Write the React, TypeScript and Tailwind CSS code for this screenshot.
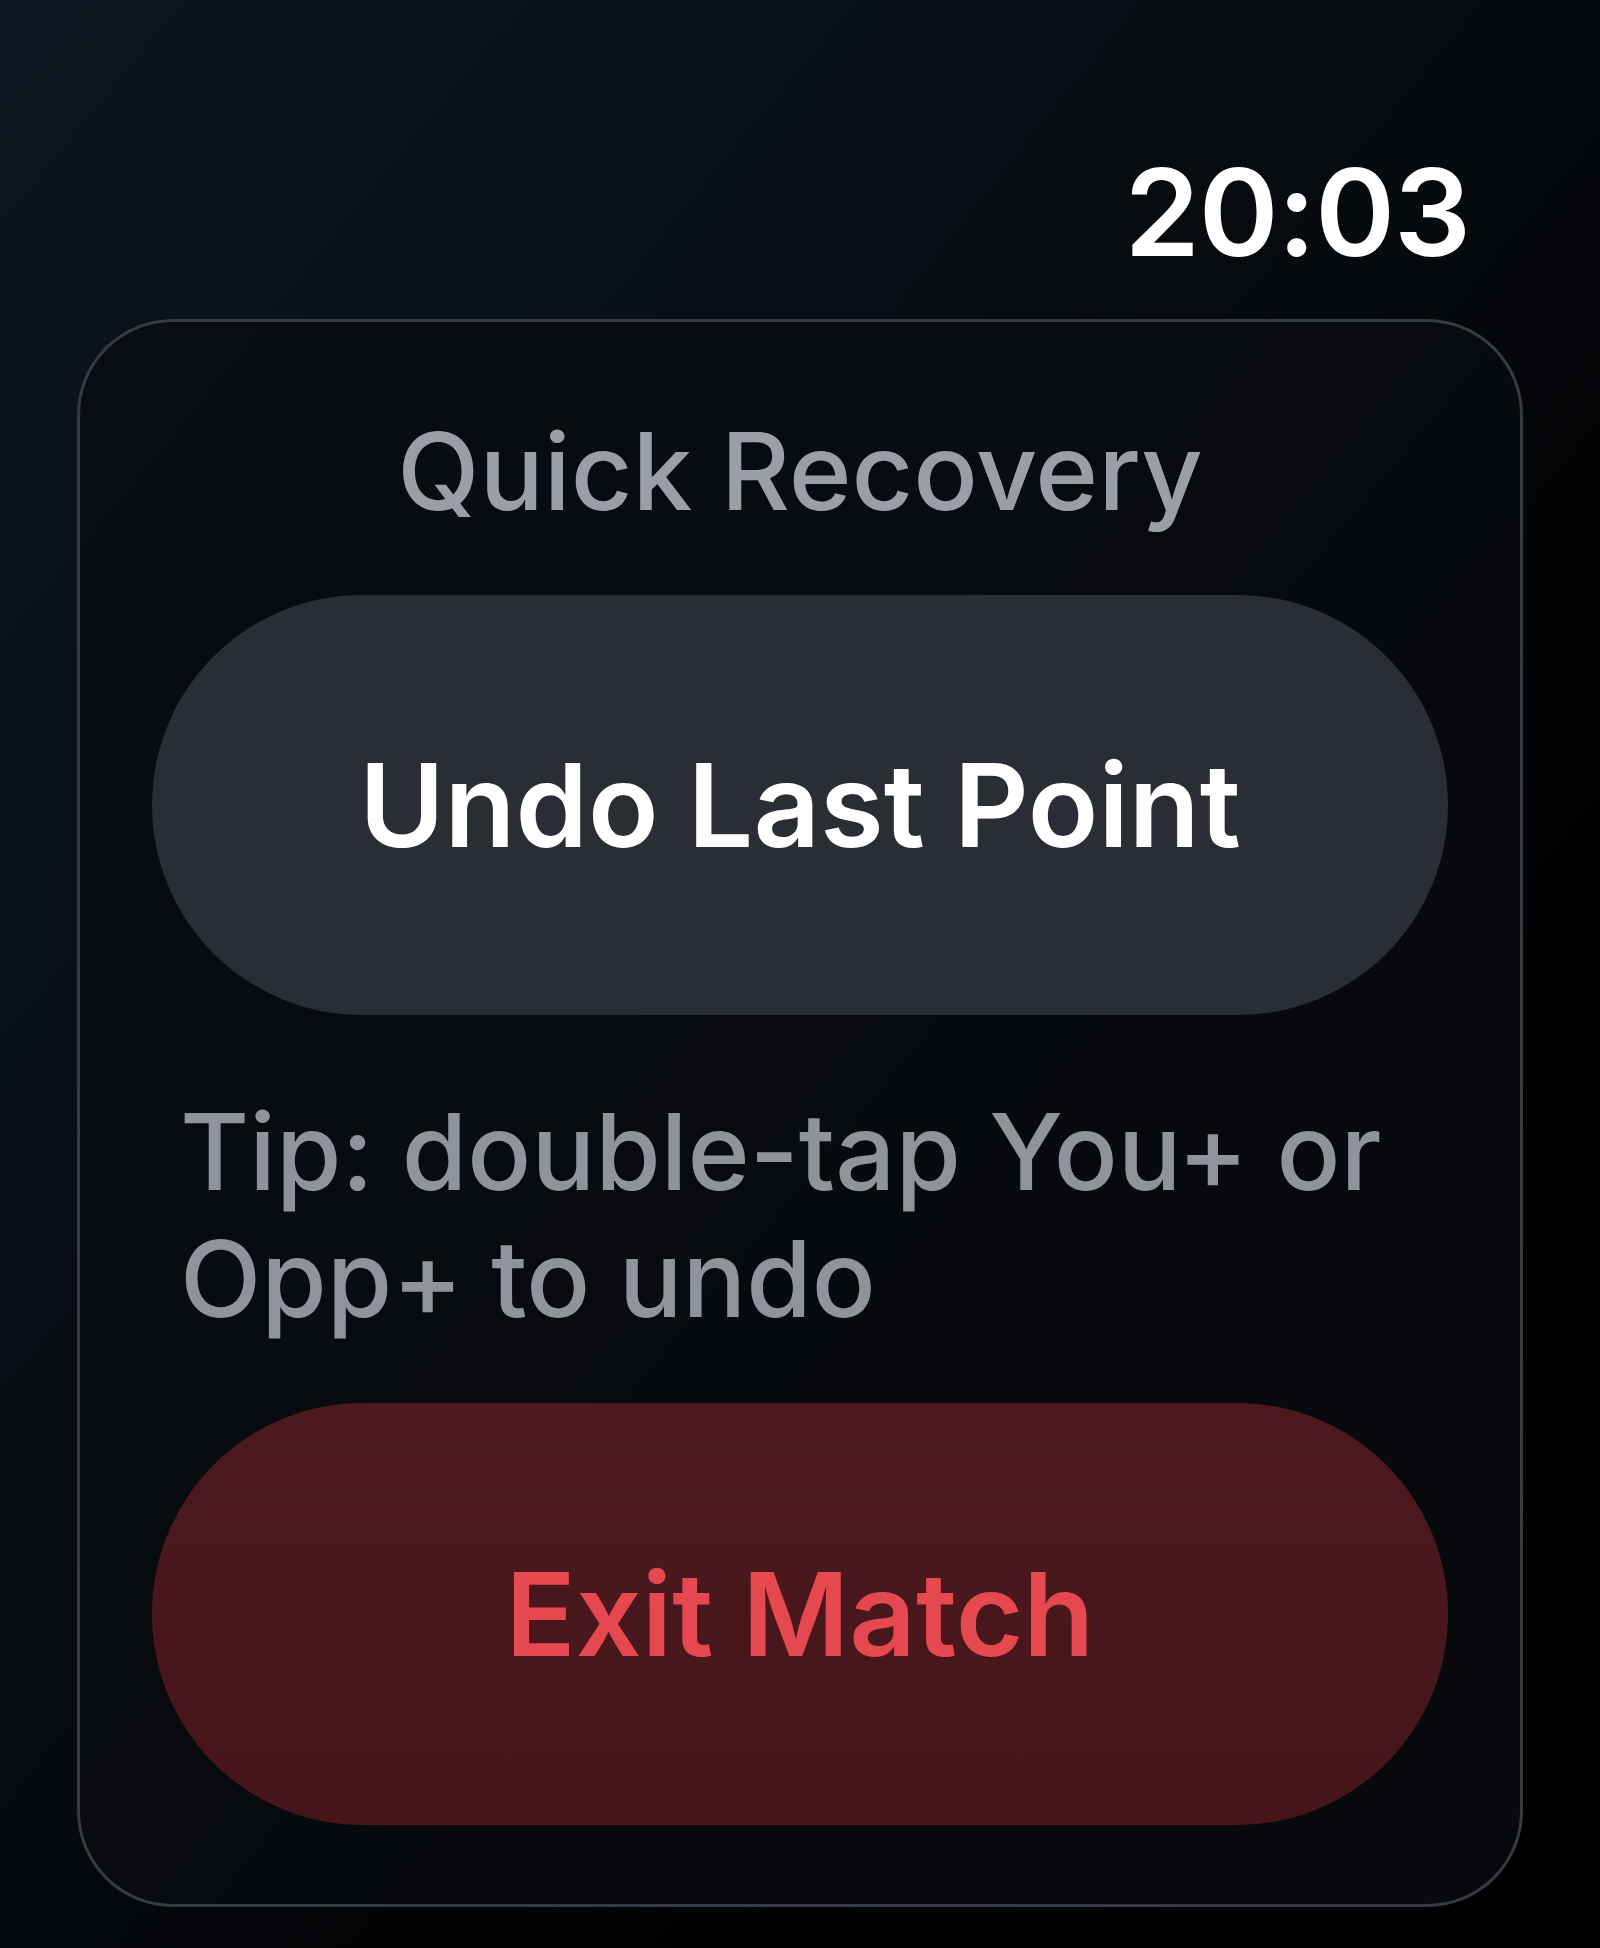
export default function App() {
    return (
        <div className="w-[1600px] h-[1948px] bg-gradient-to-br from-[#0c1721] via-[#06090d] to-[#000000] font-['Inter','Liberation_Sans',sans-serif] flex flex-col">
            <div className="flex justify-end pt-[152px] pr-[130px]">
                <span className="text-[121px] leading-none font-semibold text-white tracking-[-1px]">20:03</span>
            </div>

            <div className="mt-[46px] mx-[77px] border-[3px] border-[#363a41] rounded-[96px] bg-[#090b0f]/80 px-[72px] pt-[96px] pb-[79px] flex flex-col">
                <h2 className="text-center text-[107px] leading-none font-medium text-[#9a9ea6]">Quick Recovery</h2>

                <button
                    type="button"
                    className="mt-[70px] h-[420px] w-full rounded-full bg-[#2a2d33] text-white text-[116px] font-semibold leading-none"
                >
                    Undo Last Point
                </button>

                <p className="mt-[73px] px-[28px] text-[106px] leading-[127px] font-medium text-[#8f939b]">
                    Tip: double-tap You+ or Opp+ to undo
                </p>

                <button
                    type="button"
                    className="mt-[61px] h-[422px] w-full rounded-full bg-gradient-to-b from-[#4c1a1e] to-[#461519] text-[#e5484e] text-[116px] font-semibold leading-none"
                >
                    Exit Match
                </button>
            </div>
        </div>
    );
}
